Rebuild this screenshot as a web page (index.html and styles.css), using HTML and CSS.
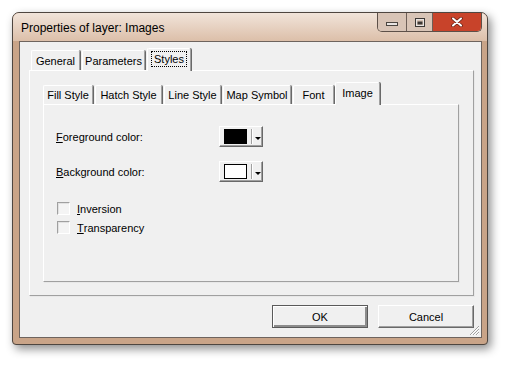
FILE: index.html
```html
<!DOCTYPE html>
<html lang="en">
<head>
    <meta charset="UTF-8">
    <title>Properties of layer: Images</title>
    <link rel="stylesheet" href="styles.css">
</head>
<body>

    <div class="window">
        <div class="titlebar">
            <span class="title">Properties of layer: Images</span>
            <div class="caption-buttons">
                <div class="cap cap-min">
                    <svg width="12" height="4" viewBox="0 0 12 4"><rect x="0.5" y="0.5" width="11" height="3" fill="#e8e4e2" stroke="#4a4540"/></svg>
                </div>
                <div class="cap cap-max">
                    <svg width="10" height="9" viewBox="0 0 10 9"><rect x="0.5" y="0.5" width="9" height="8" fill="none" stroke="#3c3835"/><rect x="1.5" y="1.5" width="7" height="6" fill="none" stroke="#e8e4e2"/><rect x="2.5" y="3.5" width="5" height="3" fill="#3c3835"/></svg>
                </div>
                <div class="cap cap-close">
                    <svg width="12" height="10" viewBox="0 0 12 10"><path d="M2 1.5 L10 8.5 M10 1.5 L2 8.5" stroke="#6a2416" stroke-width="3.6" stroke-linecap="round"/><path d="M2 1.5 L10 8.5 M10 1.5 L2 8.5" stroke="#ffffff" stroke-width="2" stroke-linecap="round"/></svg>
                </div>
            </div>
        </div>

        <div class="client">
            <div class="tabs outer-tabs">
                <div class="tab" style="width: 49px">General</div>
                <div class="tab" style="width: 63px">Parameters</div>
                <div class="tab active" style="width: 44px"><span class="focus">Styles</span></div>
            </div>
            <div class="panel outer-panel">
                <div class="tabs inner-tabs">
                    <div class="tab" style="width: 50px">Fill Style</div>
                    <div class="tab" style="width: 67px">Hatch Style</div>
                    <div class="tab" style="width: 57px">Line Style</div>
                    <div class="tab" style="width: 68px">Map Symbol</div>
                    <div class="tab" style="width: 41px">Font</div>
                    <div class="tab active" style="width: 45px">Image</div>
                </div>
                <div class="panel inner-panel">
                    <div class="row color-row">
                        <span class="label"><u>F</u>oreground color:</span>
                        <div class="color-btn">
                            <span class="swatch swatch-black"></span>
                            <span class="sep"></span>
                            <span class="arrow"></span>
                        </div>
                    </div>
                    <div class="row color-row">
                        <span class="label"><u>B</u>ackground color:</span>
                        <div class="color-btn">
                            <span class="swatch swatch-white"></span>
                            <span class="sep"></span>
                            <span class="arrow"></span>
                        </div>
                    </div>
                    <div class="checks">
                        <label class="check"><span class="box"></span><u>I</u>nversion</label>
                        <label class="check"><span class="box"></span><u>T</u>ransparency</label>
                    </div>
                </div>
            </div>
            <div class="buttons">
                <div class="btn default">OK</div>
                <div class="btn">Cancel</div>
            </div>
            <svg class="grip" width="11" height="11" viewBox="0 0 11 11">
                <path d="M10 1 L1 10 M10 4 L4 10 M10 7 L7 10" stroke="#a0a0a0" stroke-width="1"/>
                <path d="M10 2 L2 10 M10 5 L5 10 M10 8 L8 10" stroke="#fff" stroke-width="1"/>
            </svg>
        </div>
    </div>

</body>
</html>
```

FILE: styles.css
```css
body, html {
    margin: 0;
    padding: 0;
    width: 100%;
    height: 100%;
    background-color: #ffffff;
    font-family: 'Liberation Sans', Arial, sans-serif;
    font-size: 11px;
    color: #000;
    overflow: hidden;
}

.window {
    box-sizing: border-box;
    margin: 12px 0 0 12px;
    width: 476px;
    height: 333px;
    display: flex;
    flex-direction: column;
    padding: 0 5px 6px 6px;
    border: 1px solid #4e4640;
    border-radius: 7px 7px 4px 4px;
    background: #c9a488;
    box-shadow: 3px 4px 10px rgba(0, 0, 0, 0.45);
}

.titlebar {
    height: 28px;
    display: flex;
    align-items: flex-start;
    justify-content: space-between;
    background: linear-gradient(to bottom, #f1e4da, #dcbfa9);
    margin: 0 -5px 0 -6px;
    padding: 0 5px 0 6px;
    border-radius: 6px 6px 0 0;
}
.title {
    margin: 8px 0 0 2px;
    font-size: 12px;
    color: #000;
}

.caption-buttons {
    display: flex;
    height: 19px;
    border: 1px solid #5d5048;
    border-top: none;
    border-radius: 0 0 5px 5px;
    overflow: hidden;
    box-sizing: border-box;
}
.cap {
    display: flex;
    align-items: center;
    justify-content: center;
    height: 100%;
}
.cap-min, .cap-max {
    background: #d8c4b6;
    border-right: 1px solid #6d5f57;
}
.cap-min { width: 28px; }
.cap-min svg { margin-top: 4px; }
.cap-max { width: 25px; }
.cap-close {
    width: 48px;
    background: #c8432a;
}

.client {
    position: relative;
    flex: 1;
    display: flex;
    flex-direction: column;
    background-color: #f0f0f0;
    border: 1px solid #6e645e;
    padding: 6px 7px 9px 9px;
}

.tabs {
    display: flex;
    align-items: flex-end;
}
.tab {
    box-sizing: border-box;
    height: 20px;
    display: flex;
    align-items: center;
    justify-content: center;
    border-top: 1px solid #ffffff;
    border-left: 1px solid #ffffff;
    border-right: 1px solid #a0a0a0;
    box-shadow: 1px 0 0 #696969;
    border-radius: 2px 2px 0 0;
    margin-right: 2px;
    white-space: nowrap;
}
.tab.active {
    height: 23px;
    margin-bottom: -1px;
    padding-bottom: 3px;
    position: relative;
    background-color: #f0f0f0;
}
.outer-tabs { margin-left: 2px; }
.inner-tabs .tab { height: 19px; }
.inner-tabs .tab.active { height: 23px; margin-left: -1px; }

.focus {
    outline: 1px dotted #000;
    outline-offset: 1px;
    padding: 0 1px;
}

.panel {
    box-sizing: border-box;
    border-top: 1px solid #ffffff;
    border-left: 1px solid #ffffff;
    border-right: 1px solid #a0a0a0;
    border-bottom: 1px solid #a0a0a0;
    box-shadow: 1px 1px 0 #e8e8e8;
}
.outer-panel {
    height: 226px;
    width: 445px;
    padding: 11px 14px 13px 13px;
    display: flex;
    flex-direction: column;
}
.inner-panel {
    flex: 1;
    display: flex;
    flex-direction: column;
    padding: 21px 12px 0 12px;
}

.row {
    display: flex;
    align-items: center;
}
.color-row { height: 21px; margin-bottom: 14px; }
.label { width: 163px; }

.color-btn {
    box-sizing: border-box;
    width: 44px;
    height: 21px;
    display: flex;
    align-items: center;
    padding-left: 4px;
    border-top: 1px solid #ffffff;
    border-left: 1px solid #ffffff;
    border-right: 1px solid #696969;
    border-bottom: 1px solid #696969;
    box-shadow: inset -1px -1px 0 #a0a0a0;
}
.swatch {
    box-sizing: border-box;
    width: 23px;
    height: 15px;
    border: 1px solid #000;
}
.swatch-black { background-color: #000; }
.swatch-white { background-color: #fff; }
.sep {
    width: 1px;
    height: 15px;
    margin-left: 4px;
    background-color: #a0a0a0;
    border-right: 1px solid #fff;
}
.arrow {
    margin: 4px 0 0 2px;
    width: 0;
    height: 0;
    border-left: 3px solid transparent;
    border-right: 3px solid transparent;
    border-top: 3px solid #000;
}

.checks {
    margin-top: 3px;
    padding-left: 1px;
}
.check {
    display: flex;
    align-items: center;
    height: 19px;
}
.box {
    box-sizing: border-box;
    width: 13px;
    height: 13px;
    margin-right: 7px;
    background-color: #f4f4f4;
    border-top: 1px solid #a0a0a0;
    border-left: 1px solid #a0a0a0;
    border-right: 1px solid #ffffff;
    border-bottom: 1px solid #ffffff;
    box-shadow: inset 1px 1px 0 #e2e2e2;
}

.buttons {
    display: flex;
    justify-content: flex-end;
    gap: 10px;
    margin-top: 9px;
    width: 445px;
}
.btn {
    box-sizing: border-box;
    width: 96px;
    height: 23px;
    display: flex;
    align-items: center;
    justify-content: center;
    border-top: 1px solid #ffffff;
    border-left: 1px solid #ffffff;
    border-right: 1px solid #696969;
    border-bottom: 1px solid #696969;
    box-shadow: inset -1px -1px 0 #a0a0a0;
}
.btn.default {
    border: 1px solid #5a5a5a;
    box-shadow: inset 1px 1px 0 #ffffff, inset -2px -2px 0 #8c8c8c;
}

.grip {
    position: absolute;
    right: 1px;
    bottom: 1px;
}
```
